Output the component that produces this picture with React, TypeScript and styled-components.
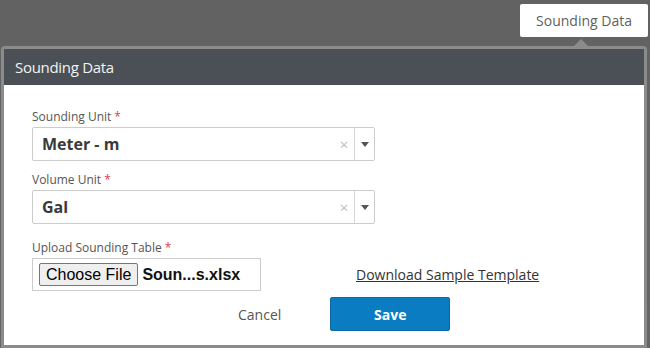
import { createGlobalStyle } from "styled-components";
import styled from "styled-components";

const GlobalStyle = createGlobalStyle`
  html, body {
    margin: 0;
    padding: 0;
  }
  body {
    background: #636363;
    font-family: "Open Sans", "Liberation Sans", sans-serif;
  }
`;

const Page = styled.div`
  width: 650px;
  height: 348px;
  display: flex;
  flex-direction: column;
  background: linear-gradient(#626262, #666666);
  overflow: hidden;
`;

const TopBar = styled.div`
  display: flex;
  justify-content: flex-end;
  padding: 4px 2px 0 0;
`;

const Tooltip = styled.div`
  position: relative;
  height: 33px;
  line-height: 33px;
  padding: 0 16px;
  background: #ffffff;
  border-radius: 2px;
  font-size: 14px;
  color: #5f5f5f;
`;

const Dialog = styled.section`
  position: relative;
  margin: 9px 3px 0 1px;
  flex: 1;
  border: 3px solid #8b8b8b;
  border-bottom: 0;
  border-radius: 4px 4px 0 0;
  display: flex;
  flex-direction: column;
  background: #fff;

  /* notch under the tooltip */
  &::before {
    content: "";
    position: absolute;
    top: -10px;
    left: 569px;
    border-left: 8px solid transparent;
    border-right: 8px solid transparent;
    border-bottom: 8px solid #8b8b8b;
  }
`;

const Header = styled.header`
  height: 36px;
  display: flex;
  align-items: center;
  padding: 0 11px;
  background: #4a5055;
  color: #f2f2f2;
  font-size: 15px;
  letter-spacing: -0.3px;
`;

const Body = styled.div`
  flex: 1;
  padding: 24px 28px 0;
  display: flex;
  flex-direction: column;
  border-bottom: 3px solid #8b8b8b;
`;

const Label = styled.label<{ $top?: number }>`
  display: block;
  font-size: 12px;
  line-height: 16px;
  color: #555;
  margin: ${(p) => p.$top ?? 0}px 0 2px;

  & > em {
    font-style: normal;
    color: #e0414c;
    margin-left: 3px;
  }
`;

const Select = styled.div`
  width: 343px;
  height: 34px;
  box-sizing: border-box;
  border: 1px solid #cccccc;
  border-radius: 2px;
  display: flex;
  align-items: center;
`;

const SelectValue = styled.span`
  flex: 1;
  padding-left: 9px;
  font-size: 16px;
  font-weight: 700;
  color: #3a3a3a;
`;

const Clear = styled.span`
  width: 20px;
  text-align: center;
  font-size: 15px;
  color: #bdbdbd;
`;

const Caret = styled.span`
  align-self: stretch;
  width: 19px;
  border-left: 1px solid #d6d6d6;
  display: flex;
  align-items: center;
  justify-content: center;

  &::after {
    content: "";
    border-left: 4px solid transparent;
    border-right: 4px solid transparent;
    border-top: 5px solid #555;
  }
`;

const UploadRow = styled.div`
  display: flex;
  align-items: center;
`;

const FileBox = styled.div`
  width: 229px;
  height: 33px;
  box-sizing: border-box;
  border: 1px solid #cccccc;
  display: flex;
  align-items: center;
  padding-left: 6px;
  font-family: "Liberation Sans", Arial, sans-serif;
  font-size: 16px;
`;

const FileButton = styled.button`
  height: 23px;
  padding: 0 6px;
  border: 1px solid #767676;
  border-radius: 2px;
  background: #efefef;
  font-family: "Liberation Sans", Arial, sans-serif;
  font-size: 16px;
  color: #000;
`;

const FileName = styled.span`
  margin-left: 4px;
  font-weight: 700;
  color: #111;
`;

const DownloadLink = styled.a`
  margin-left: 95px;
  font-size: 14px;
  color: #333;
  text-decoration: underline;
`;

const Actions = styled.div`
  display: flex;
  align-items: center;
  margin-top: 6px;
  padding-left: 206px;
`;

const CancelButton = styled.button`
  border: 0;
  background: none;
  padding: 0;
  font-family: "Open Sans", sans-serif;
  font-size: 14px;
  color: #555;
`;

const SaveButton = styled.button`
  margin-left: 49px;
  width: 120px;
  height: 34px;
  border: 1px solid #0b69a3;
  border-radius: 2px;
  background: #0a7dc2;
  color: #fff;
  font-family: "Open Sans", sans-serif;
  font-size: 14px;
  font-weight: 700;
`;

const Required = () => <em>*</em>;

const SelectField = ({ value }: { value: string }) => (
  <Select>
    <SelectValue>{value}</SelectValue>
    <Clear>×</Clear>
    <Caret />
  </Select>
);

export default function App() {
  return (
    <Page>
      <GlobalStyle />
      <TopBar>
        <Tooltip>Sounding Data</Tooltip>
      </TopBar>
      <Dialog>
        <Header>Sounding Data</Header>
        <Body>
          <Label>
            Sounding Unit<Required />
          </Label>
          <SelectField value="Meter - m" />
          <Label $top={11}>
            Volume Unit<Required />
          </Label>
          <SelectField value="Gal" />
          <Label $top={16}>
            Upload Sounding Table<Required />
          </Label>
          <UploadRow>
            <FileBox>
              <FileButton>Choose File</FileButton>
              <FileName>Soun...s.xlsx</FileName>
            </FileBox>
            <DownloadLink href="#">Download Sample Template</DownloadLink>
          </UploadRow>
          <Actions>
            <CancelButton>Cancel</CancelButton>
            <SaveButton>Save</SaveButton>
          </Actions>
        </Body>
      </Dialog>
    </Page>
  );
}
